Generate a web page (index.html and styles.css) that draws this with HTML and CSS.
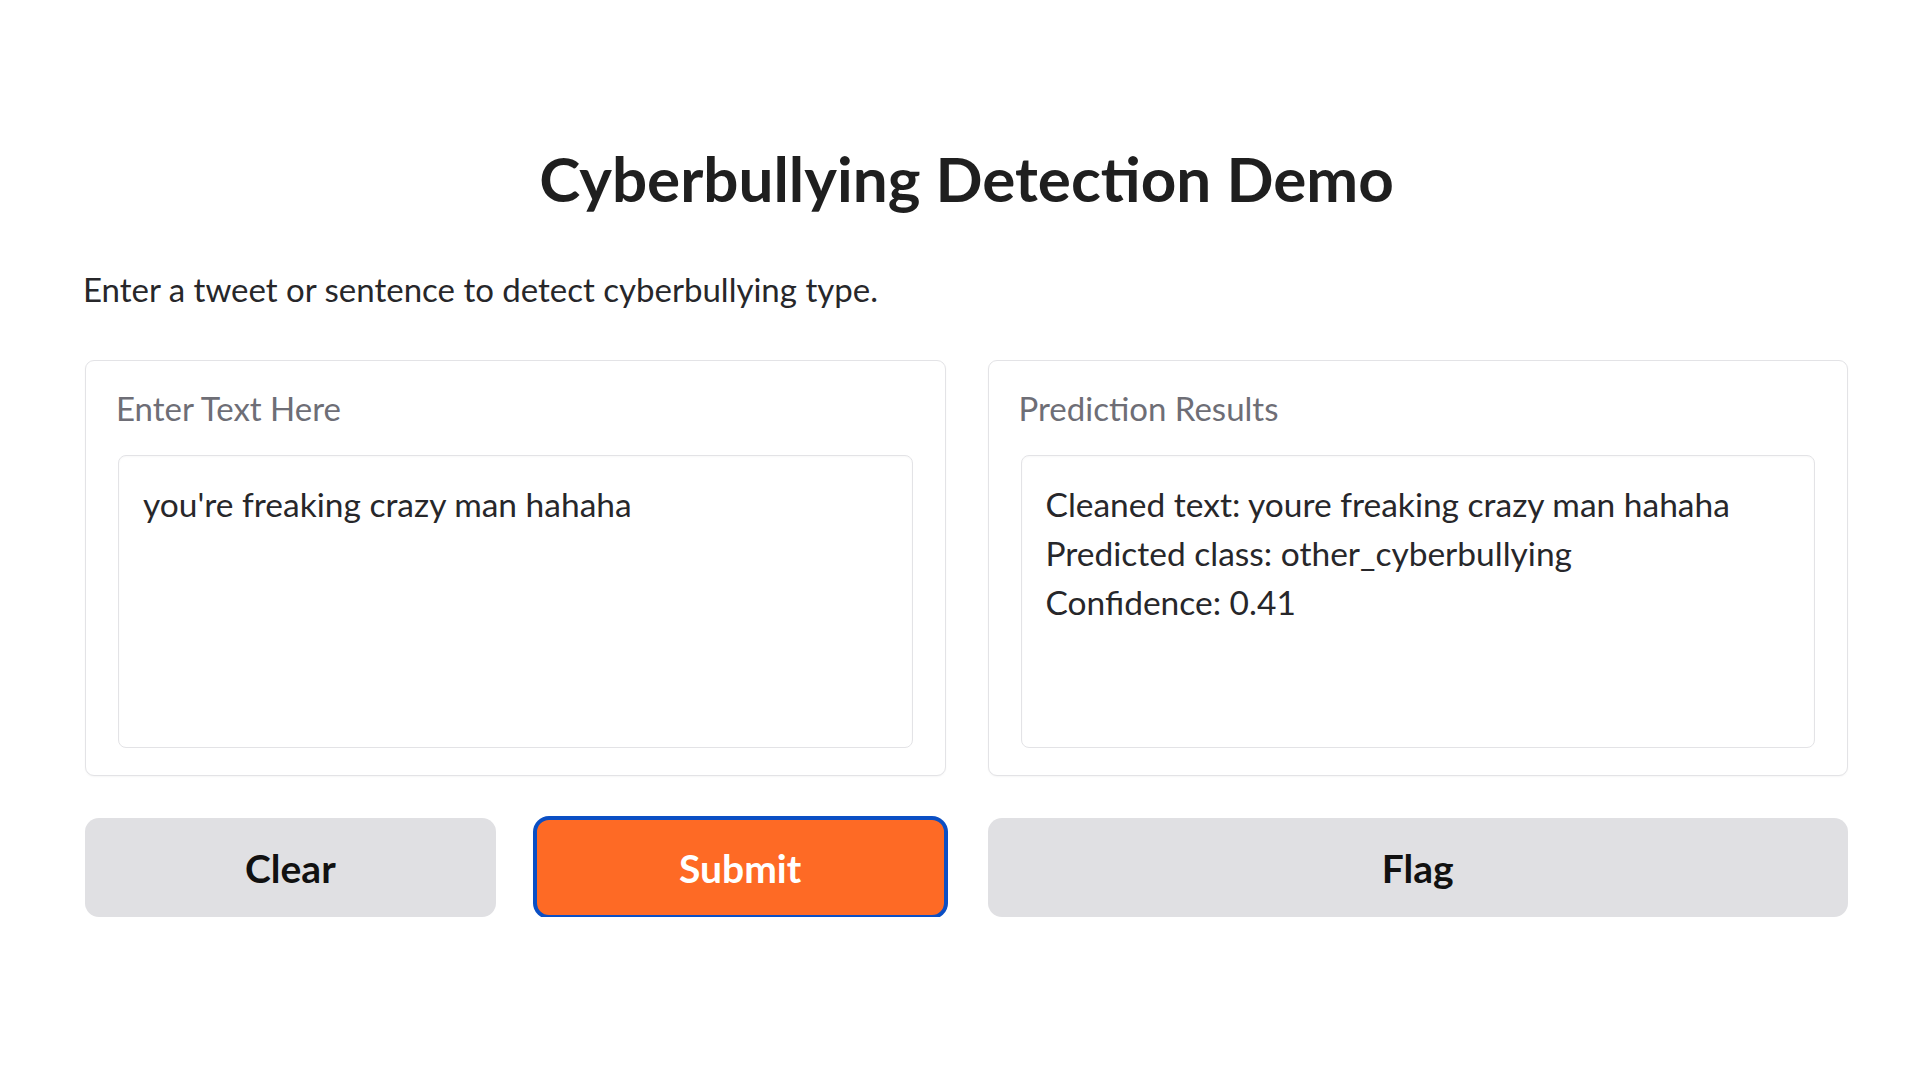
FILE: index.html
```html
<!DOCTYPE html>
<html lang="en">
<head>
<meta charset="utf-8">
<title>Cyberbullying Detection Demo</title>
<link rel="stylesheet" href="styles.css">
</head>
<body>
<div class="app">
  <h1 class="title">Cyberbullying Detection Demo</h1>
  <p class="desc">Enter a tweet or sentence to detect cyberbullying type.</p>
  <div class="main">
    <div class="col">
      <div class="panel">
        <div class="label">Enter Text Here</div>
        <div class="field">you're freaking crazy man hahaha</div>
      </div>
      <div class="btn-row">
        <button class="btn secondary">Clear</button>
        <button class="btn primary">Submit</button>
      </div>
    </div>
    <div class="col">
      <div class="panel">
        <div class="label">Prediction Results</div>
        <div class="field">Cleaned text: youre freaking crazy man hahaha<br>Predicted class: other_cyberbullying<br>Confidence: 0.41</div>
      </div>
      <div class="btn-row single">
        <button class="btn secondary">Flag</button>
      </div>
    </div>
  </div>
</div>
</body>
</html>
```

FILE: styles.css
```css
html, body {
  margin: 0;
  padding: 0;
  background: #ffffff;
}

body {
  font-family: "Lato", "Noto Sans", sans-serif;
  color: #27272a;
}

.app {
  margin-left: 85px;
  width: 1763px;
  padding-top: 139px;
}

.title {
  margin: 0;
  font-size: 62px;
  line-height: 78px;
  font-weight: 700;
  text-align: center;
  color: #1f1f1f;
}

.desc {
  margin: 51px 0 0 -2px;
  font-size: 33px;
  line-height: 42px;
  color: #27272a;
}

.main {
  margin-top: 50px;
  display: grid;
  grid-template-columns: 1fr 1fr;
  column-gap: 42px;
}

.col {
  display: flex;
  flex-direction: column;
  gap: 42px;
}

.panel {
  border: 1px solid #e3e3e6;
  border-radius: 9px;
  padding: 26px 32px 27px 32px;
  background: #ffffff;
  box-shadow: 0 1px 2px rgba(0, 0, 0, 0.04);
}

.label {
  font-size: 33px;
  line-height: 42px;
  color: #6e6e76;
  margin: 0 0 26px -2px;
}

.field {
  box-sizing: border-box;
  height: 293px;
  border: 1px solid #e3e3e6;
  border-radius: 8px;
  padding: 24px 24px;
  font-size: 33.5px;
  line-height: 49px;
  color: #27272a;
  box-shadow: inset 0 1px 2px rgba(0, 0, 0, 0.03);
}

.btn-row {
  display: grid;
  grid-template-columns: 1fr 1fr;
  column-gap: 39px;
}

.btn-row.single {
  grid-template-columns: 1fr;
}

.btn {
  box-sizing: border-box;
  height: 99px;
  border: none;
  border-radius: 14px;
  font-family: "Lato", "Noto Sans", sans-serif;
  font-size: 39px;
  font-weight: 700;
  cursor: pointer;
}

.btn.secondary {
  background: #e0e0e3;
  color: #111111;
}

.btn.primary {
  background: #fe6a25;
  color: #ffffff;
  border: 2px solid #0b4fc4;
  box-shadow: 0 0 0 2px #0b4fc4;
}
```
